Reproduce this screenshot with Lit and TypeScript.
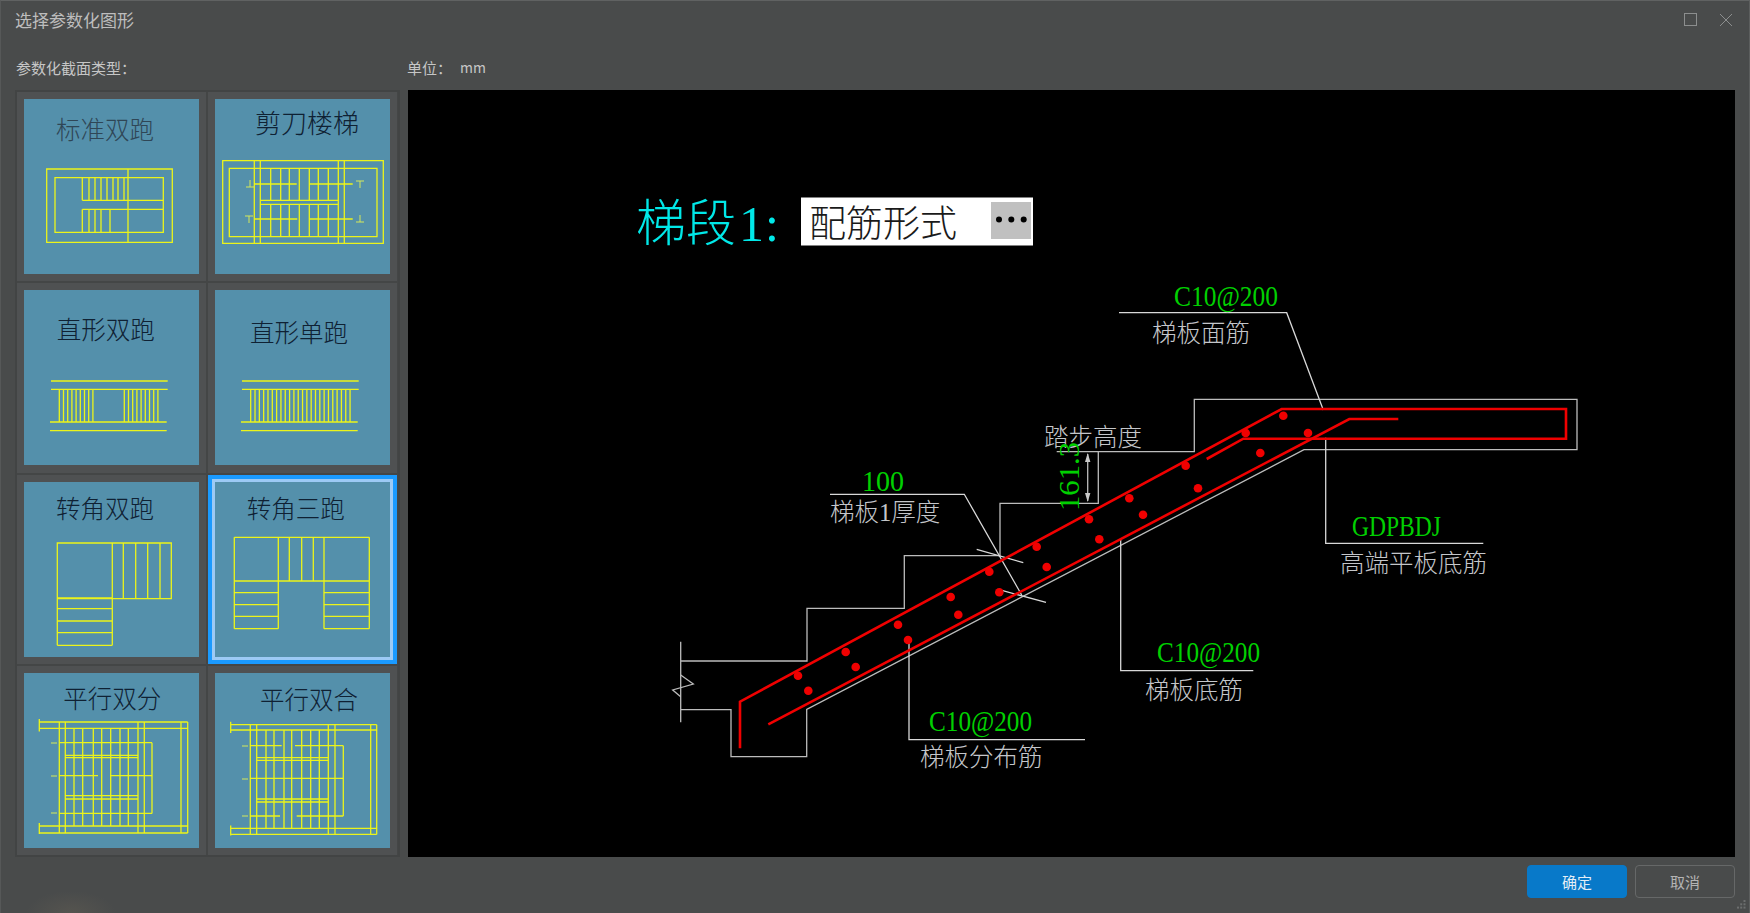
// app.ts
import { css, html, svg, LitElement } from 'lit';
import { customElement } from 'lit/decorators.js';

const h = (y: number, a: number, b: number) => `M${a} ${y}H${b}`;
const v = (x: number, a: number, b: number) => `M${x} ${a}V${b}`;
const rect = (a: number, b: number, c: number, d: number) => `M${a} ${b}H${c}V${d}H${a}Z`;
const each = (xs: number[], fn: (n: number) => string) => xs.map(fn).join('');
const range = (from: number, step: number, count: number) =>
  Array.from({ length: count }, (_, i) => from + i * step);

// straight run rails shared by two tiles
const rails = h(91, 27, 143.7) + h(99.3, 27, 143.7) + h(132, 26, 142.7) + h(140.7, 26, 142.7);

// parallel stairs share the same skeleton
function parallel(o: {
  top: number[]; bottom: number[]; left: number; right: number[]; long: number[];
  treads: number[]; doubles: number[][]; wall: number;
  rows: number[][];
}) {
  const [t1, t2] = o.top;
  const [b1, b2] = o.bottom;
  const [r1, r2] = o.right;
  const inner = o.long[1];
  const innerR = o.long[2];
  return (
    h(t1, o.left, r2) + h(t2, o.left, r2) + h(b1, o.left, r2) + h(b2, o.left, r2) +
    v(o.left, t1 - 3, t2 + 3) + v(o.left, b1 - 3, b2 + 1) + v(r1, t1, b2) + v(r2, t1, b2) +
    each(o.long, (x) => v(x, t1, b2)) +
    each(o.treads, (x) => v(x, t2, b1)) +
    o.doubles.map((y) => h(y[0], inner, innerR) + h(y[1], inner, innerR)).join('') +
    o.rows.map((r) => h(r[0], r[1], r[2])).join('') +
    v(o.wall, o.rows[0][0], o.rows[o.rows.length - 1][0])
  );
}

interface Tile {
  title: string;
  x: number;
  y: number;
  size?: number;
  dim?: boolean;
  selected?: boolean;
  d: string;
  marks?: string;
}

const tiles: Tile[] = [
  {
    title: '标准双跑', x: 32, y: 40, dim: true,
    d:
      rect(22.7, 70, 148.3, 143.3) + rect(31, 78.7, 139.3, 133.3) + v(104, 70, 143.3) +
      h(101.3, 58.3, 139.3) + h(110.3, 58.3, 139.3) + v(58.3, 78.7, 101.3) + v(58.3, 110.3, 133.3) +
      each([65, 71, 77, 83, 89, 94, 100], (x) => v(x, 78.7, 101.3)) +
      each([65, 71, 77, 86], (x) => v(x, 110.3, 133.3)),
  },
  {
    title: '剪刀楼梯', x: 40, y: 34, size: 26,
    d:
      rect(7.7, 61.7, 168.3, 144.3) + rect(14.3, 69.3, 162, 137.7) +
      each([39.3, 45.3, 123.3, 129.3], (x) => v(x, 61.7, 144.3)) +
      h(101.3, 45.3, 123.3) + h(105.3, 45.3, 123.3) +
      each([55.7, 65.7, 74.3, 84.3, 94.3, 103.3, 113.3], (x) => v(x, 69.3, 101.3) + v(x, 105.3, 137.7)) +
      h(85, 39.3, 81.7) + h(85, 94.3, 137.7) + h(120, 39.3, 82.3) + h(120, 94.3, 137.7),
    marks:
      h(88, 31, 39) + v(35, 81, 88) + h(82, 141, 149) + v(145, 82, 89) +
      h(117, 30, 38) + v(34, 117, 124) + h(123, 141, 149) + v(145, 116, 123),
  },
  {
    title: '直形双跑', x: 32.7, y: 49,
    d: rails + each([...range(35.3, 4.2, 9), ...range(100.3, 4.2, 9)], (x) => v(x, 99.3, 132)),
  },
  {
    title: '直形单跑', x: 35, y: 52,
    d: rails + each(range(35.7, 4.32, 24), (x) => v(x, 99.3, 132)),
  },
  {
    title: '转角双跑', x: 32, y: 36,
    d:
      rect(33.3, 61, 147.3, 116.7) + v(33.3, 61, 163.3) + v(88.3, 61, 163.3) + h(163.3, 33.3, 88.3) +
      each([99.3, 111.7, 123.7, 136], (x) => v(x, 61, 116.7)) +
      each([116, 126.7, 139, 150.7], (y) => h(y, 33.3, 88.3)),
  },
  {
    title: '转角三跑', x: 31.7, y: 36, selected: true,
    d:
      h(55.3, 19.3, 154.3) + h(99, 19.3, 154.3) + v(19.3, 55.3, 146.7) + v(154.3, 55.3, 146.7) +
      v(63.3, 55.3, 146.7) + v(109, 55.3, 146.7) + h(146.7, 19.3, 63.3) + h(146.7, 109, 154.3) +
      each([74.3, 86.7, 98.3], (x) => v(x, 55.3, 99)) +
      each([110.7, 122.7, 134.3], (y) => h(y, 19.3, 63.3) + h(y, 109, 154.3)),
  },
  {
    title: '平行双分', x: 39.3, y: 35,
    d: parallel({
      top: [49, 55.4], bottom: [153, 160], left: 15.3, right: [157, 163.7],
      long: [35.3, 41.3, 114, 120.3], treads: [50, 58.7, 69.3, 77.7, 86.7, 96, 104.3],
      doubles: [[82.4, 84.7], [122.7, 126]], wall: 128,
      rows: [[69.7, 35.3, 128], [102.7, 35.3, 74], [102.7, 86, 128], [140.4, 35.3, 128]],
    }),
    marks: h(70, 27, 33) + h(103, 27, 33) + h(140, 27, 33),
  },
  {
    title: '平行双合', x: 45, y: 36,
    d: parallel({
      top: [51.7, 57], bottom: [155.4, 161.4], left: 15.7, right: [155.7, 161.7],
      long: [35.3, 41.7, 113.3, 120], treads: [51, 59, 69, 76.7, 86.7, 95.7, 104.3],
      doubles: [[84.7, 87.4], [126, 129]], wall: 128.3,
      rows: [[72.7, 35.3, 66.7], [72.7, 80, 128.3], [105.4, 35.3, 128.3], [143, 35.3, 65], [143, 81.7, 128.3]],
    }),
    marks: h(73, 27, 33) + h(106, 27, 33) + h(143, 27, 33),
  },
];

const dots = [
  [1283.3, 415.7], [1245.7, 433], [1308, 433], [1260.3, 453], [1185.7, 465.7], [1198, 488.3],
  [1129.3, 498.3], [1143, 514.7], [1089, 519.3], [1099.3, 539.3], [1036.7, 546.7], [1046.7, 567],
  [989.3, 571.7], [999.3, 592.3], [950.7, 597], [958.3, 614.7], [898, 624.7], [908, 640],
  [845.7, 652], [855.7, 667], [798, 675.7], [808.3, 690.7],
];

// [text, x, baseline, width]
const greenLabels: [string, number, number, number][] = [
  ['C10@200', 1174, 306, 104],
  ['100', 862, 491, 42],
  ['GDPBDJ', 1352, 536, 89],
  ['C10@200', 1157, 662, 103],
  ['C10@200', 929, 731, 103],
];

// [text, x, baseline]
const greyLabels: [string, number, number][] = [
  ['梯板面筋', 1152, 341.5],
  ['踏步高度', 1044, 446],
  ['梯板1厚度', 830, 521],
  ['高端平板底筋', 1340, 572],
  ['梯板底筋', 1145, 699],
  ['梯板分布筋', 920, 766],
];

@customElement('app-root')
export class AppRoot extends LitElement {
  static styles = css`
    :host {
      display: block;
      width: 1750px;
      height: 913px;
      overflow: hidden;
    }

    .dialog {
      position: relative;
      box-sizing: border-box;
      width: 1750px;
      height: 913px;
      display: flex;
      flex-direction: column;
      border-top: 1px solid #606262;
      border-right: 1px solid #5c5e5e;
      border-left: 1px solid #565858;
      background:
        radial-gradient(ellipse 45px 22px at 70px 912px, #55544f, transparent),
        #494b4b;
      font-family: 'Noto Sans CJK SC', 'Noto Sans', sans-serif;
      color: #c6c6c6;
    }

    .title-bar {
      box-sizing: border-box;
      height: 39px;
      flex: none;
      display: flex;
      align-items: center;
      justify-content: space-between;
      padding: 0 16px 2px 14px;
      font-size: 17px;
      color: #bdbdbd;
    }

    .win-btns {
      display: flex;
      align-items: center;
      gap: 22px;
    }

    .win-btns svg {
      display: block;
      stroke: #8c8e8e;
      fill: none;
    }

    .labels {
      box-sizing: border-box;
      height: 50px;
      flex: none;
      display: flex;
      align-items: center;
      padding: 4px 0 0 15px;
      font-size: 15px;
    }

    .labels .type {
      width: 391px;
    }

    .labels .mm {
      margin-left: 8px;
      font-size: 14px;
    }

    .main {
      flex: none;
      height: 767px;
      display: flex;
      gap: 8px;
      padding: 0 14px;
    }

    .panel {
      box-sizing: border-box;
      width: 385px;
      height: 767px;
      flex: none;
      display: grid;
      grid-template-columns: 189px 189px;
      grid-template-rows: 189px 190px 189px 189px;
      gap: 2px;
      border: 2px solid #424444;
      background: #444646;
    }

    .cell {
      box-sizing: border-box;
      padding: 7px;
      background: #4f5152;
    }

    .cell.selected {
      padding: 3px;
      border: 4px solid #1a9aff;
      background: #9ccaf5;
    }

    .tile {
      display: block;
      width: 175px;
      height: 175px;
      background: #5490ab;
    }

    .tile text {
      font-family: 'Noto Sans CJK SC', sans-serif;
      font-weight: 300;
      fill: #0f2133;
    }

    .tile text.dim {
      fill: #2f4656;
    }

    .tile path {
      fill: none;
      stroke: #ecf41a;
      stroke-width: 1.3;
    }

    .tile path.mark {
      stroke: #d4e85a;
      stroke-width: 1;
    }

    .canvas {
      display: block;
      width: 1327px;
      height: 767px;
      flex: none;
      background: #000;
    }

    .canvas text {
      font-family: 'Liberation Serif', 'Noto Sans CJK SC', serif;
      font-weight: 300;
    }

    .canvas .outline {
      fill: none;
      stroke: #bcbcbc;
      stroke-width: 1.3;
    }

    .canvas .leader {
      fill: none;
      stroke: #d8d8d8;
      stroke-width: 1.3;
    }

    .canvas .rebar {
      fill: none;
      stroke: #f00000;
      stroke-width: 2.6;
    }

    .canvas .dot {
      fill: #f00000;
    }

    .canvas .green {
      font-size: 29.5px;
      fill: #00d000;
    }

    .canvas .grey {
      font-size: 24.5px;
      fill: #c4c6ca;
    }

    .canvas .cyan {
      fill: #00e8e8;
    }

    .footer {
      flex: 1;
      display: flex;
      justify-content: flex-end;
      align-items: flex-start;
      gap: 8px;
      padding: 8px 14px 0 0;
    }

    .btn {
      box-sizing: border-box;
      width: 100px;
      height: 33px;
      display: flex;
      align-items: center;
      justify-content: center;
      border-radius: 4px;
      font-size: 15px;
      border: 1px solid #666868;
      color: #b4b4b4;
    }

    .btn.primary {
      border-color: #0879c9;
      background: #0879c9;
      color: #e4eef6;
    }

    .grip {
      position: absolute;
      right: 3px;
      bottom: 4px;
      fill: #6c6e6e;
    }
  `;

  private renderTile(t: Tile) {
    return html`
      <div class="cell ${t.selected ? 'selected' : ''}">
        <svg class="tile" viewBox="0 0 175 175">
          <text class=${t.dim ? 'dim' : ''} x=${t.x} y=${t.y} font-size=${t.size ?? 24.5}>${t.title}</text>
          <path d=${t.d}></path>
          ${t.marks ? svg`<path class="mark" d=${t.marks}></path>` : ''}
        </svg>
      </div>
    `;
  }

  private renderDrawing() {
    return html`
      <svg class="canvas" viewBox="408 90 1327 767">
        <text class="cyan" font-size="50"><tspan x="636" y="241">梯段</tspan><tspan x="739" y="241">1</tspan><tspan x="765" y="241">:</tspan></text>

        <rect x="801" y="197.5" width="232" height="48" fill="#fff"></rect>
        <text x="809" y="236.5" font-size="37" fill="#1a1a1a">配筋形式</text>
        <rect x="991" y="202" width="40" height="37" fill="#c0c0c0"></rect>
        <circle cx="999" cy="219.5" r="3" fill="#000"></circle>
        <circle cx="1011.3" cy="219.5" r="3" fill="#000"></circle>
        <circle cx="1023.7" cy="219.5" r="3" fill="#000"></circle>

        <!-- concrete outline -->
        <path class="outline" d="M680.7 641.7V722.3M680.7 661H807V608.3H904.3V555.7H1000V503.3H1098.3V451.7H1194.3V399.3H1577V449.7H1304L806.7 709.3V756.7H731V709.7H680.7"></path>
        <path class="outline" d="M680.7 675L693.3 684L672.7 690L680.7 696.7"></path>
        <path class="outline" d="M1056.7 451.7H1098.3M1087.7 454V501"></path>
        <path d="M1087.7 453L1085 462H1090.4Z M1087.7 502L1085 493H1090.4Z" fill="#c8c8c8"></path>

        <!-- leaders -->
        <path class="leader" d="M1119 312.7H1286.7L1323.3 410"></path>
        <path class="leader" d="M830 494.3H964.3L1021.7 595"></path>
        <path class="leader" d="M976.7 549.3L1023.3 562.7M1002.7 590.7L1046 602.3"></path>
        <path class="leader" d="M909 643V739.7H1085"></path>
        <path class="leader" d="M1120.7 538V670.7H1253.3"></path>
        <path class="leader" d="M1325.7 437.7V543.3H1483.3"></path>

        <!-- rebar -->
        <path class="rebar" d="M740 748.3V701.7L1281.7 409H1566V438.7H1243.3L1206.7 459"></path>
        <path class="rebar" d="M768.3 724.3L1349.3 419H1398.3"></path>
        ${dots.map(([x, y]) => svg`<circle class="dot" cx=${x} cy=${y} r="4.3"></circle>`)}

        ${greyLabels.map(([t, x, y]) => svg`<text class="grey" x=${x} y=${y}>${t}</text>`)}
        ${greenLabels.map(
          ([t, x, y, w]) =>
            svg`<text class="green" x=${x} y=${y} textLength=${w} lengthAdjust="spacingAndGlyphs">${t}</text>`,
        )}
        <text class="green" transform="translate(1079 511) rotate(-90)" textLength="69" lengthAdjust="spacingAndGlyphs">161.3</text>
      </svg>
    `;
  }

  render() {
    return html`
      <div class="dialog">
        <div class="title-bar">
          <span>选择参数化图形</span>
          <div class="win-btns">
            <svg width="13" height="13" viewBox="0 0 13 13"><rect x="0.5" y="0.5" width="12" height="12"></rect></svg>
            <svg width="14" height="14" viewBox="0 0 14 14"><path d="M1 1L13 13M13 1L1 13"></path></svg>
          </div>
        </div>
        <div class="labels">
          <span class="type">参数化截面类型：</span>
          <span>单位：</span>
          <span class="mm">mm</span>
        </div>
        <div class="main">
          <div class="panel">${tiles.map((t) => this.renderTile(t))}</div>
          ${this.renderDrawing()}
        </div>
        <div class="footer">
          <div class="btn primary">确定</div>
          <div class="btn">取消</div>
        </div>
        <svg class="grip" width="9" height="9" viewBox="0 0 9 9">
          <rect x="6.5" y="0" width="2" height="2"></rect>
          <rect x="3.2" y="3.3" width="2" height="2"></rect>
          <rect x="6.5" y="3.3" width="2" height="2"></rect>
          <rect x="0" y="6.6" width="2" height="2"></rect>
          <rect x="3.2" y="6.6" width="2" height="2"></rect>
          <rect x="6.5" y="6.6" width="2" height="2"></rect>
        </svg>
      </div>
    `;
  }
}
